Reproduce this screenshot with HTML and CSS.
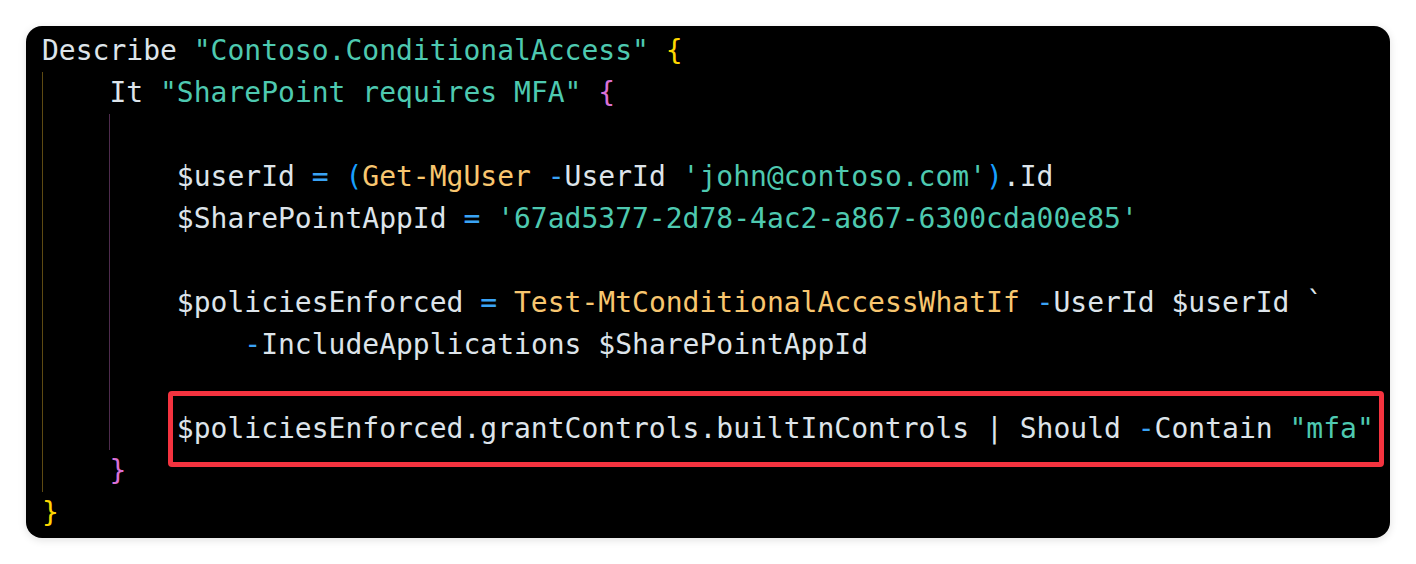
FILE: index.html
```html
<!DOCTYPE html>
<html lang="en">
<head>
<meta charset="utf-8">
<title>Pester test</title>
<link rel="stylesheet" href="styles.css">
</head>
<body>
<div class="code">
  <div class="ln"><span class="kw">Describe</span> <span class="s">"Contoso.ConditionalAccess"</span> <span class="b1">{</span></div>
  <div class="g1">
    <div class="ln">    <span class="kw">It</span> <span class="s">"SharePoint requires MFA"</span> <span class="b2">{</span></div>
    <div class="g2">
      <div class="ln"></div>
      <div class="ln">        $userId <span class="op">=</span> <span class="b3">(</span><span class="fn">Get-MgUser</span> <span class="op">-</span>UserId <span class="s">'john@contoso.com'</span><span class="b3">)</span>.Id</div>
      <div class="ln">        $SharePointAppId <span class="op">=</span> <span class="s">'67ad5377-2d78-4ac2-a867-6300cda00e85'</span></div>
      <div class="ln"></div>
      <div class="ln">        $policiesEnforced <span class="op">=</span> <span class="fn">Test-MtConditionalAccessWhatIf</span> <span class="op">-</span>UserId $userId `</div>
      <div class="ln">            <span class="op">-</span>IncludeApplications $SharePointAppId</div>
      <div class="ln"></div>
      <div class="ln">        <span class="hl">$policiesEnforced.grantControls.builtInControls | Should <span class="op">-</span>Contain <span class="s">"mfa"</span></span></div>
    </div>
    <div class="ln">    <span class="b2">}</span></div>
  </div>
  <div class="ln"><span class="b1">}</span></div>
</div>
</body>
</html>
```
FILE: styles.css
```css
html, body {
  margin: 0;
  background: #ffffff;
}
body {
  padding: 26px;
}
.code {
  background: #000000;
  border-radius: 16px;
  box-shadow: 0 2px 8px rgba(0, 0, 0, 0.12);
  padding: 4px 0 4px 16px;
  font-family: "DejaVu Sans Mono", "Liberation Mono", monospace;
  font-size: 28px;
  line-height: 42px;
  color: #dde4ea;
}
.ln {
  white-space: pre;
  min-height: 42px;
}
.g1 {
  background: linear-gradient(#5e4a12, #5e4a12) no-repeat 0 0 / 1px 100%;
}
.g2 {
  background: linear-gradient(#4e2b4d, #4e2b4d) no-repeat 4ch 0 / 1px 100%;
}
.kw { color: #dde4ea; }
.s { color: #4ec9b0; }
.fn { color: #f8c66f; }
.op { color: #3aa3f5; }
.b1 { color: #ffd700; }
.b2 { color: #da70d6; }
.b3 { color: #179fff; }
.hl {
  display: inline-block;
  position: relative;
}
.hl::before {
  content: "";
  position: absolute;
  left: -9px;
  right: -10px;
  top: -17px;
  bottom: -17px;
  border: 5px solid #f4333f;
  border-radius: 4px;
}
```
